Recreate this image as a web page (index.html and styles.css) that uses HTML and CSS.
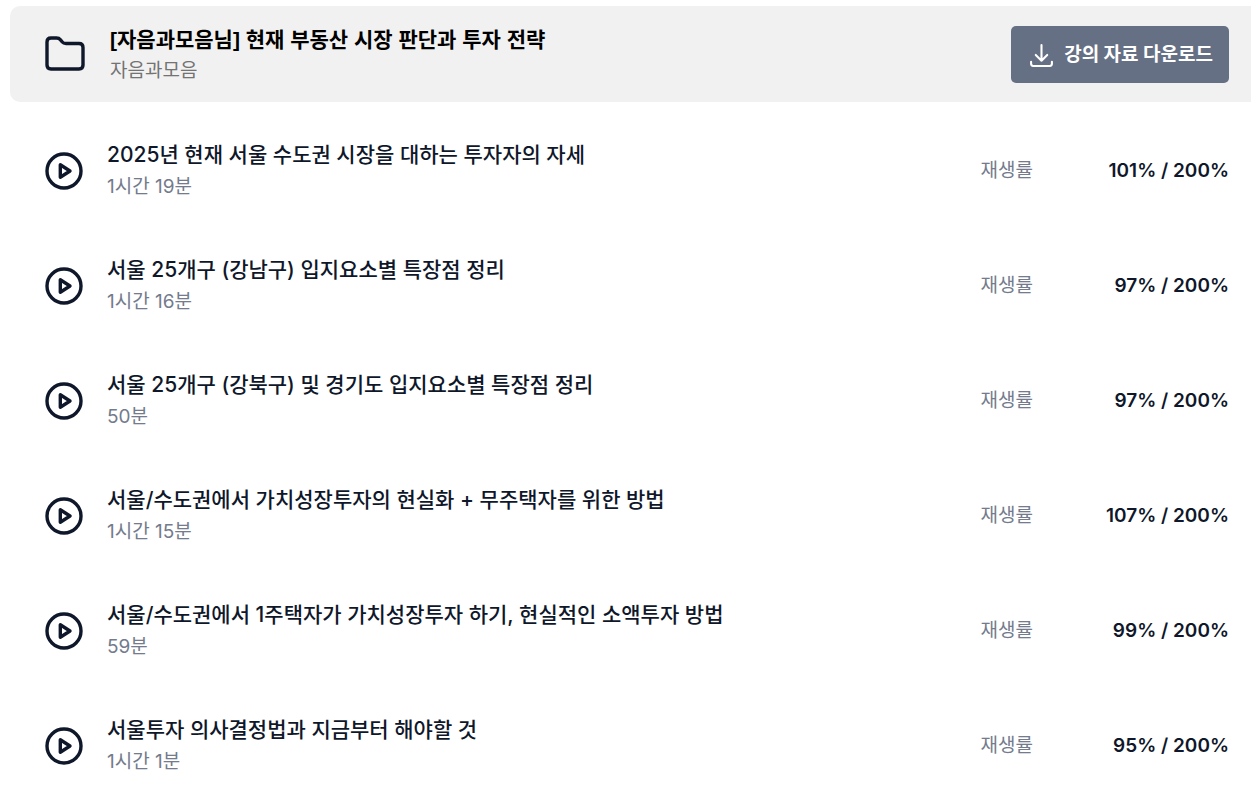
FILE: index.html
```html
<!DOCTYPE html>
<html lang="ko">
<head>
<meta charset="utf-8">
<meta name="viewport" content="width=device-width, initial-scale=1">
<title>강의 목록</title>
<link rel="stylesheet" href="styles.css">
</head>
<body>
<svg class="sprite" aria-hidden="true">
  <symbol id="play" viewBox="0 0 40 40">
    <circle cx="20" cy="20" r="17" fill="none" stroke="currentColor" stroke-width="3.4"/>
    <path d="M16.300 13.800v12.400l9.700-6.200z" fill="none" stroke="currentColor" stroke-width="3.4" stroke-linejoin="round"/>
  </symbol>
</svg>
<main class="course">
  <header class="course-header">
    <svg class="folder" viewBox="0 0 42 38" aria-hidden="true"><path d="M3 30V7Q3 3 7 3H12.500Q15 3 16.500 4.800L18.300 7Q19.500 8.500 22 8.500H35Q39 8.500 39 12.500V30Q39 34 35 34H7Q3 34 3 30Z" fill="none" stroke="currentColor" stroke-width="3.4" stroke-linejoin="round"/></svg>
    <div class="heading">
      <h1 class="course-title">[자음과모음님] 현재 부동산 시장 판단과 투자 전략</h1>
      <p class="author">자음과모음</p>
    </div>
    <button class="download" type="button">
      <svg class="download-icon" viewBox="0 0 24 24" aria-hidden="true"><path d="M12 2V17M6.500 11.500L12 17L17.500 11.500M2 18V20Q2 22 4 22H20Q22 22 22 20V18" fill="none" stroke="currentColor" stroke-width="2" stroke-linecap="round" stroke-linejoin="round"/></svg>
      <span>강의 자료 다운로드</span>
    </button>
  </header>
  <ul class="lessons">
    <li class="lesson"><svg class="play" aria-hidden="true"><use href="#play"/></svg><div class="info"><h2 class="title">2025년 현재 서울 수도권 시장을 대하는 투자자의 자세</h2><p class="time">1시간 19분</p></div><span class="label">재생률</span><span class="rate">101% / 200%</span></li>
    <li class="lesson"><svg class="play" aria-hidden="true"><use href="#play"/></svg><div class="info"><h2 class="title">서울 25개구 (강남구) 입지요소별 특장점 정리</h2><p class="time">1시간 16분</p></div><span class="label">재생률</span><span class="rate">97% / 200%</span></li>
    <li class="lesson"><svg class="play" aria-hidden="true"><use href="#play"/></svg><div class="info"><h2 class="title">서울 25개구 (강북구) 및 경기도 입지요소별 특장점 정리</h2><p class="time">50분</p></div><span class="label">재생률</span><span class="rate">97% / 200%</span></li>
    <li class="lesson"><svg class="play" aria-hidden="true"><use href="#play"/></svg><div class="info"><h2 class="title">서울/수도권에서 가치성장투자의 현실화 + 무주택자를 위한 방법</h2><p class="time">1시간 15분</p></div><span class="label">재생률</span><span class="rate">107% / 200%</span></li>
    <li class="lesson"><svg class="play" aria-hidden="true"><use href="#play"/></svg><div class="info"><h2 class="title">서울/수도권에서 1주택자가 가치성장투자 하기, 현실적인 소액투자 방법</h2><p class="time">59분</p></div><span class="label">재생률</span><span class="rate">99% / 200%</span></li>
    <li class="lesson"><svg class="play" aria-hidden="true"><use href="#play"/></svg><div class="info"><h2 class="title">서울투자 의사결정법과 지금부터 해야할 것</h2><p class="time">1시간 1분</p></div><span class="label">재생률</span><span class="rate">95% / 200%</span></li>
  </ul>
</main>
</body>
</html>
```
FILE: styles.css
```css
* { box-sizing: border-box; }
body { margin: 0; background: #fff; color: #0f172a; font-family: Inter, "Noto Sans CJK KR", sans-serif; }
h1, h2, p, ul { margin: 0; padding: 0; }
.sprite { display: none; }
.course { padding: 6px 0 0 10px; }
.course-header { display: flex; align-items: center; min-height: 96px; padding: 0 22px 0 34px; background: #f1f1f1; border-radius: 10px 0 0 10px; }
.folder { width: 42px; height: 38px; flex: none; margin-right: 24px; }
.heading { flex: 1; min-width: 0; padding-top: 2px; }
.course-title { font-family: "Liberation Sans", "Noto Sans CJK KR", sans-serif; font-size: 21px; line-height: 32px; font-weight: 700; color: #000; }
.author { font-size: 19px; line-height: 30px; color: #737373; }
.download { display: flex; align-items: center; justify-content: center; gap: 10px; height: 57px; padding: 2px 16px 0 18px; border: 0; border-radius: 5px; background: #667085; color: #fff; font: 700 19px/28px Inter, "Noto Sans CJK KR", sans-serif; white-space: nowrap; }
.download-icon { width: 25px; height: 25px; }
.lessons { list-style: none; padding-top: 11px; }
.lesson { display: flex; align-items: center; min-height: 115px; padding: 0 22px 0 34px; }
.play { width: 40px; height: 40px; flex: none; margin-right: 23px; }
.info { flex: 1; min-width: 0; }
.title { font-size: 21px; line-height: 32px; font-weight: 500; }
.time { font-size: 19px; line-height: 32px; color: #737b8c; }
.label { font-size: 19px; line-height: 28px; color: #737b8c; }
.rate { width: 196px; font-size: 19px; line-height: 28px; font-weight: 600; text-align: right; }
```
